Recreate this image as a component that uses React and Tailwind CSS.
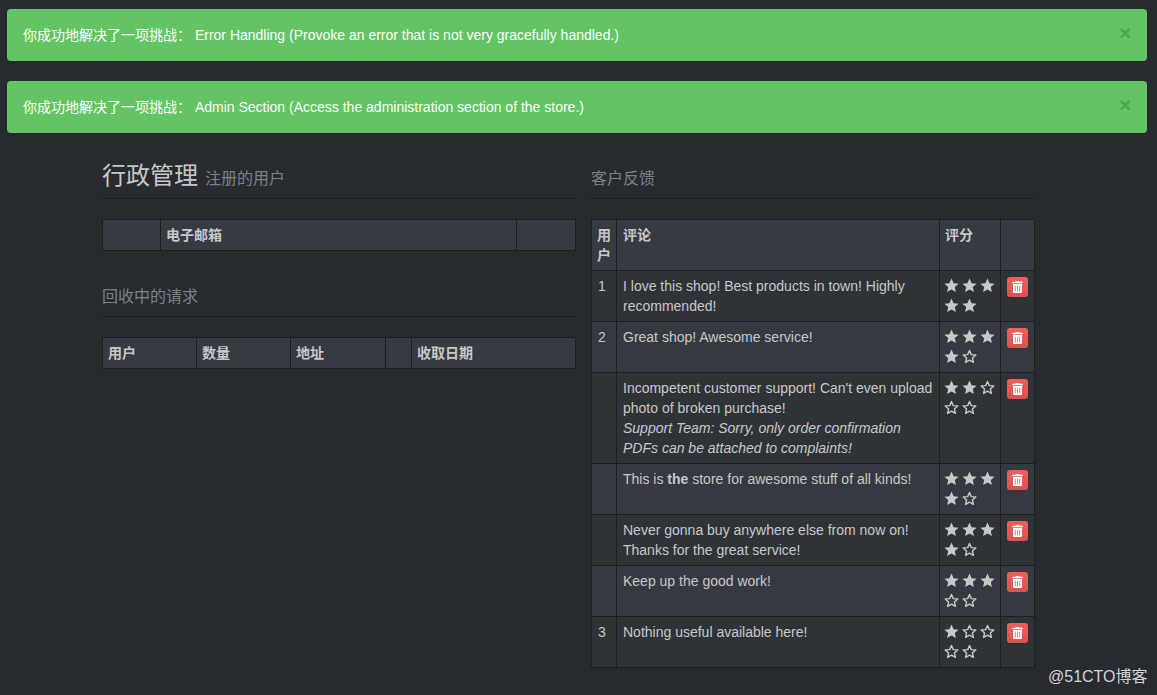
import React from "react";
import { FaTrashAlt } from "react-icons/fa";

const FONT = "font-['Liberation_Sans','Noto_Sans_CJK_SC',sans-serif]";
const TH = "border border-[#1c1e22] p-[5px] text-left align-top font-bold text-[#c8c8c8] bg-[#363b42]";
const RTH = "border border-[#1c1e22] pt-[5px] pb-[5px] pl-[6px] pr-[4px] text-left align-top font-bold text-[#c8c8c8] bg-[#363b42]";
const TD = "border border-[#1c1e22] pt-[5px] pb-[5px] pl-[6px] pr-[4px] align-top text-[#c8c8c8]";
const STAR_CELL = "border border-[#1c1e22] pt-[5px] pb-[5px] pl-[4px] pr-0 align-top text-[#c8c8c8]";
const BTN_CELL = "border border-[#1c1e22] pt-[5px] pb-[5px] pl-[5px] pr-0 align-top text-[#c8c8c8]";

function Star({ filled }) {
  const d = "M7.5 .6l2.1 4.6 5 .5-3.8 3.3 1.1 5L7.5 11.4 3.1 14l1.1-5L.4 5.7l5-.5z";
  return (
    <svg viewBox="0 0 15 15" className="w-[15px] h-[15px] mt-[2px] mb-[3px] shrink-0">
      {filled ? (
        <path d={d} fill="#c8c8c8" />
      ) : (
        <path d="M7.5 1.5l1.8 4.1 4.5.4-3.4 3 1 4.4-3.9-2.3-3.9 2.3 1-4.4-3.4-3 4.5-.4z" fill="none" stroke="#c8c8c8" strokeWidth="1.4" strokeLinejoin="round" />
      )}
    </svg>
  );
}

function Stars({ n }) {
  return (
    <div className="flex flex-wrap gap-x-[3px] w-[52px]">
      {[0, 1, 2, 3, 4].map((i) => (
        <Star key={i} filled={i < n} />
      ))}
    </div>
  );
}

function Alert({ children }) {
  return (
    <div className="flex items-center justify-between h-[52px] rounded-[4px] bg-[#62c462] pl-[16px] pr-[16px] text-[14px] leading-[20px] text-white">
      <span>{children}</span>
      <span className="text-[20px] leading-[20px] font-bold text-[#4fa34f] -mt-[4px]">×</span>
    </div>
  );
}

const reviews = [
  ["1", <>I love this shop! Best products in town! Highly recommended!</>, 5],
  ["2", <>Great shop! Awesome service!</>, 4],
  [
    "",
    <>
      Incompetent customer support! Can't even upload photo of broken purchase!
      <br />
      <em>Support Team: Sorry, only order confirmation PDFs can be attached to complaints!</em>
    </>,
    2,
  ],
  ["", <>This is <strong>the</strong> store for awesome stuff of all kinds!</>, 4],
  ["", <>Never gonna buy anywhere else from now on! Thanks for the great service!</>, 4],
  ["", <>Keep up the good work!</>, 3],
  ["3", <>Nothing useful available here!</>, 1],
];

export default function App() {
  return (
    <div className={`${FONT} relative h-[695px] overflow-hidden bg-[#272b30] text-[14px] leading-[20px] text-[#c8c8c8]`}>
      <div className="flex flex-col gap-[20px] pt-[9px] pl-[7px] pr-[10px]">
        <Alert>你成功地解决了一项挑战： Error Handling (Provoke an error that is not very gracefully handled.)</Alert>
        <Alert>你成功地解决了一项挑战： Admin Section (Access the administration section of the store.)</Alert>
      </div>

      <div className="flex gap-[15px] pt-[27px] pl-[102px]">
        <div className="w-[474px] shrink-0">
          <div className="border-b border-[#1c1e22] pb-[6px] flex items-baseline gap-[7px]">
            <span className="text-[24px] leading-[32px] text-[#c8c8c8]">行政管理</span>
            <span className="text-[16px] text-[#7a8288]">注册的用户</span>
          </div>
          <table className="mt-[20px] w-full table-fixed border-collapse">
            <colgroup>
              <col className="w-[58px]" />
              <col />
              <col className="w-[59px]" />
            </colgroup>
            <thead>
              <tr>
                <th className={TH}></th>
                <th className={TH}>电子邮箱</th>
                <th className={TH}></th>
              </tr>
            </thead>
          </table>
          <div className="mt-[36px] border-b border-[#1c1e22] pb-[9px] text-[16px] leading-[20px] text-[#7a8288]">回收中的请求</div>
          <table className="mt-[20px] w-full table-fixed border-collapse">
            <colgroup>
              <col className="w-[94px]" />
              <col className="w-[94px]" />
              <col className="w-[95px]" />
              <col className="w-[26px]" />
              <col />
            </colgroup>
            <thead>
              <tr>
                <th className={TH}>用户</th>
                <th className={TH}>数量</th>
                <th className={TH}>地址</th>
                <th className={TH}></th>
                <th className={TH}>收取日期</th>
              </tr>
            </thead>
          </table>
        </div>

        <div className="w-[444px] shrink-0">
          <div className="border-b border-[#1c1e22] pt-[9px] pb-[9px] text-[16px] leading-[20px] text-[#7a8288]">客户反馈</div>
          <table className="mt-[20px] w-full table-fixed border-collapse">
            <colgroup>
              <col className="w-[25px]" />
              <col className="w-[323px]" />
              <col className="w-[61px]" />
              <col />
            </colgroup>
            <thead>
              <tr>
                <th className={TH}>用户</th>
                <th className={RTH}>评论</th>
                <th className={TH}>评分</th>
                <th className={RTH}></th>
              </tr>
            </thead>
            <tbody>
              {reviews.map(([user, text, n], i) => (
                <tr key={i} className={i % 2 === 0 ? "bg-[#2e3338]" : "bg-[#353a41]"}>
                  <td className={TD}>{user}</td>
                  <td className={TD}>{text}</td>
                  <td className={STAR_CELL}>
                    <Stars n={n} />
                  </td>
                  <td className={BTN_CELL}>
                    <button className="flex items-center justify-center w-[21px] h-[20px] mt-[1px] ml-px rounded-[3px] bg-gradient-to-b from-[#ee5f5b] to-[#d9534f]">
                      <FaTrashAlt className="w-[11px] h-[12px] text-white" />
                    </button>
                  </td>
                </tr>
              ))}
            </tbody>
          </table>
        </div>
      </div>

      <div className="absolute left-[1048px] top-[667px] text-[16px] leading-[20px] text-[#d4d4d4]">@51CTO博客</div>
    </div>
  );
}
